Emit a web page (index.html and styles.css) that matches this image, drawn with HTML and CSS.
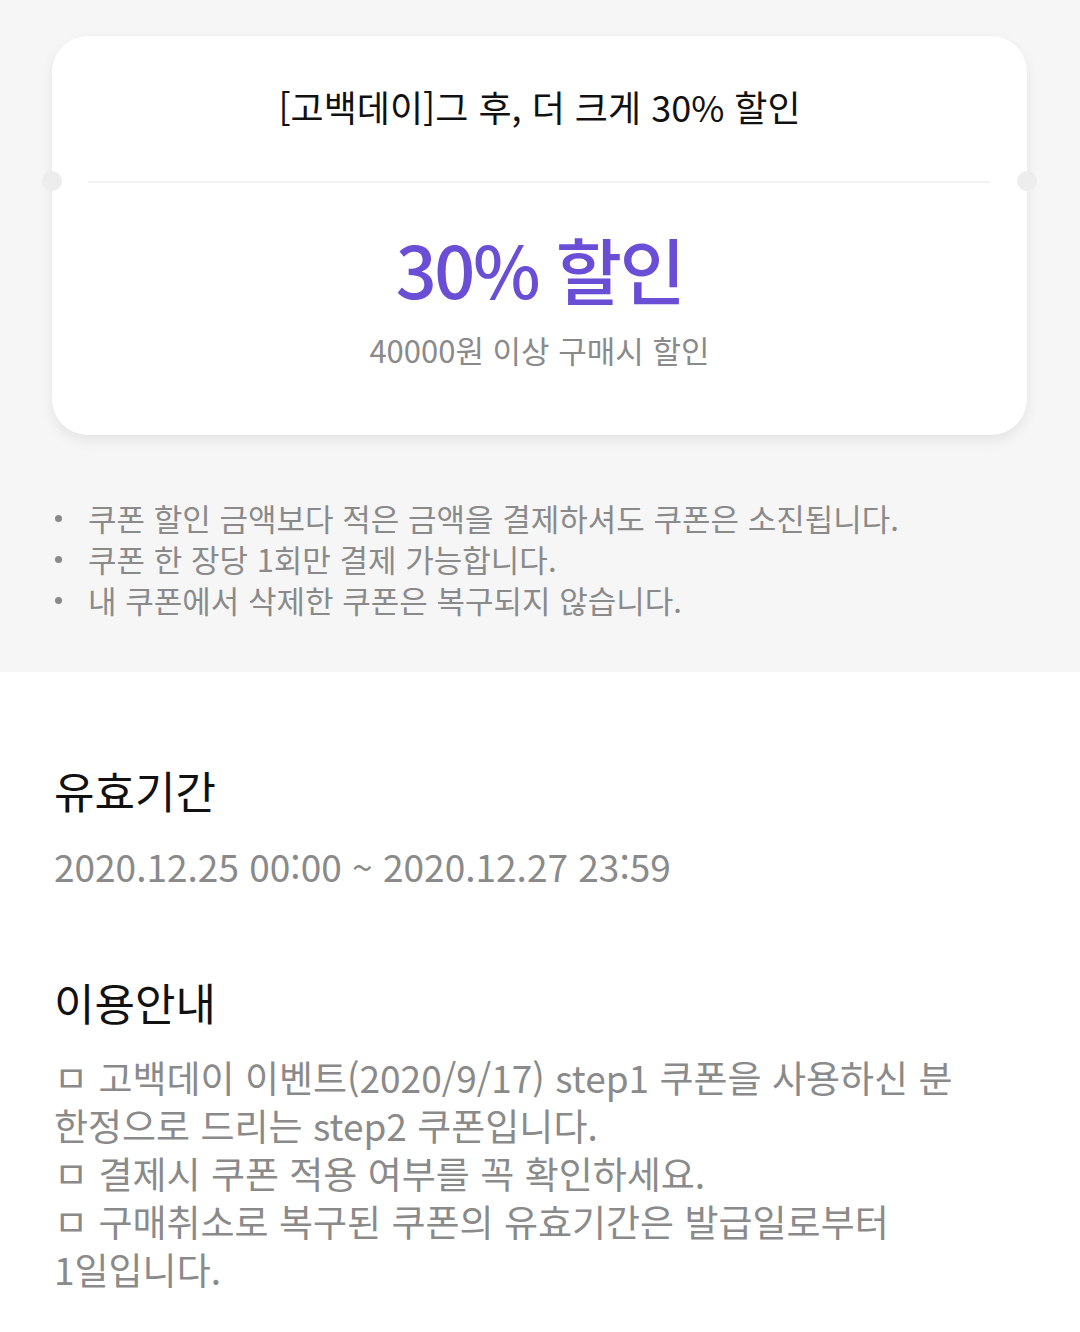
FILE: index.html
```html
<!DOCTYPE html>
<html lang="ko">
<head>
    <meta charset="UTF-8">
    <meta name="viewport" content="width=device-width, initial-scale=1.0">
    <title>쿠폰 상세</title>
    <link rel="stylesheet" href="styles.css">
</head>
<body>
    <div class="coupon-area">
        <div class="coupon">
            <div class="coupon-title">[고백데이]그 후, 더 크게 30% 할인</div>
            <div class="coupon-line"></div>
            <div class="coupon-body">
                <div class="discount">30% 할인</div>
                <div class="condition">40000원 이상 구매시 할인</div>
            </div>
        </div>
        <ul class="notice">
            <li>쿠폰 할인 금액보다 적은 금액을 결제하셔도 쿠폰은 소진됩니다.</li>
            <li>쿠폰 한 장당 1회만 결제 가능합니다.</li>
            <li>내 쿠폰에서 삭제한 쿠폰은 복구되지 않습니다.</li>
        </ul>
    </div>
    <div class="info">
        <h2 class="info-title">유효기간</h2>
        <div class="period">2020.12.25 00:00 ~ 2020.12.27 23:59</div>
        <h2 class="info-title guide-title">이용안내</h2>
        <div class="guide">
            <p>ㅁ 고백데이 이벤트(2020/9/17) step1 쿠폰을 사용하신 분 한정으로 드리는 step2 쿠폰입니다.</p>
            <p>ㅁ 결제시 쿠폰 적용 여부를 꼭 확인하세요.</p>
            <p>ㅁ 구매취소로 복구된 쿠폰의 유효기간은 발급일로부터 1일입니다.</p>
        </div>
    </div>
</body>
</html>
```

FILE: styles.css
```css
* {
    margin: 0;
    padding: 0;
}
body {
    background-color: #fff;
    font-family: "Noto Sans CJK KR", "Noto Sans", sans-serif;
    color: #111;
    word-break: keep-all;
}
.coupon-area {
    background-color: #f6f6f6;
    padding: 36px 53px 52px 52px;
}
.coupon {
    position: relative;
    background-color: #fff;
    border-radius: 36px;
    box-shadow: 0 6px 14px rgba(0, 0, 0, 0.07);
}
.coupon-title {
    height: 139px;
    padding-bottom: 6px;
    display: flex;
    align-items: center;
    justify-content: center;
    font-size: 36px;
    color: #111;
}
.coupon-line {
    height: 2px;
    margin: 0 37px 0 36px;
    background-color: #f3f3f3;
}
.coupon-line::before,
.coupon-line::after {
    content: '';
    position: absolute;
    top: 135px;
    width: 20px;
    height: 20px;
    border-radius: 50%;
    background-color: #ededed;
}
.coupon-line::before {
    left: -10px;
}
.coupon-line::after {
    right: -10px;
}
.coupon-body {
    padding: 42px 0 65px;
    text-align: center;
}
.discount {
    font-size: 72px;
    line-height: 86px;
    font-weight: 500;
    color: #6a4fd6;
    letter-spacing: -2.5px;
}
.condition {
    margin-top: 19px;
    font-size: 31px;
    line-height: 40px;
    color: #8a8a8a;
}
.notice {
    margin-top: 62px;
    list-style: none;
    font-size: 31px;
    line-height: 41px;
    color: #8a8a8a;
}
.notice li {
    position: relative;
    padding-left: 36px;
}
.notice li::before {
    content: '';
    position: absolute;
    left: 3px;
    top: 18px;
    width: 7px;
    height: 7px;
    border-radius: 50%;
    background-color: #8a8a8a;
}
.info {
    padding: 90px 54px 40px;
}
.info-title {
    font-size: 44px;
    line-height: 56px;
    font-weight: 400;
    color: #111;
}
.period {
    margin-top: 23px;
    font-size: 37px;
    line-height: 50px;
    color: #8a8a8a;
}
.guide-title {
    margin-top: 83px;
}
.guide {
    margin-top: 23px;
    font-size: 37px;
    line-height: 48px;
    color: #8a8a8a;
}
```
